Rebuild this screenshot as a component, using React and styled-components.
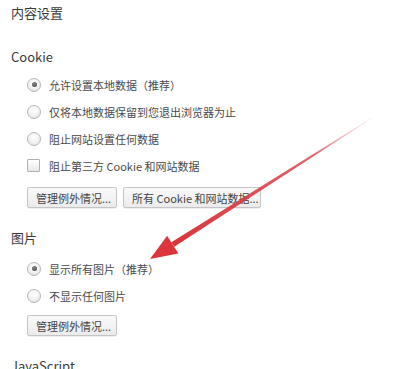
import styled, { createGlobalStyle } from "styled-components";

const GlobalStyle = createGlobalStyle`
  html, body {
    margin: 0;
    padding: 0;
    background: #ffffff;
  }
  body {
    font-family: "Noto Sans CJK SC", "Noto Sans", sans-serif;
    color: #333;
    overflow: hidden;
  }
`;

const Page = styled.div`
  position: relative;
  width: 406px;
  height: 369px;
  padding: 4px 0 0 11px;
  box-sizing: border-box;
  overflow: hidden;
`;

const Title = styled.div`
  font-size: 13px;
  line-height: 18px;
  color: #3a3a3a;
`;

const Heading = styled.div`
  font-size: 13px;
  line-height: 18px;
  color: #3a3a3a;
  margin-top: ${p => p.$gap}px;
`;

const OptionList = styled.div`
  display: flex;
  flex-direction: column;
  padding-left: 16px;
  margin-top: ${p => p.$gap}px;
`;

const Option = styled.label`
  display: flex;
  align-items: center;
  gap: 8px;
  height: 27px;
  font-size: 11px;
  color: #4a4a4a;
`;

const Radio = styled.span`
  position: relative;
  width: 12px;
  height: 12px;
  border-radius: 50%;
  border: 1px solid #b8b8b8;
  background: radial-gradient(circle at 50% 35%, #ffffff 0%, #f1f1f1 55%, #dadada 100%);
  flex-shrink: 0;

  &::after {
    content: "";
    display: ${p => (p.$checked ? "block" : "none")};
    position: absolute;
    left: 3.5px;
    top: 3.5px;
    width: 5px;
    height: 5px;
    border-radius: 50%;
    background: radial-gradient(circle at 40% 35%, #8a8a8a 0%, #4a4a4a 80%);
  }
`;

const Checkbox = styled.span`
  width: 11px;
  height: 11px;
  border: 1px solid #b0b0b0;
  border-radius: 1px;
  background: linear-gradient(#ffffff, #e8e8e8);
  flex-shrink: 0;
  margin-right: 1px;
`;

const ButtonRow = styled.div`
  display: flex;
  gap: 6px;
  padding-left: 16px;
  margin-top: ${p => p.$gap}px;
`;

const Button = styled.button`
  height: 21px;
  padding: 0 8px;
  width: ${p => p.$width}px;
  border: 1px solid #c4c4c4;
  border-radius: 2px;
  background: linear-gradient(#fafafa, #ebebeb);
  box-shadow: 0 1px 0 rgba(0, 0, 0, 0.06);
  font-family: "Noto Sans CJK SC", "Noto Sans", sans-serif;
  font-size: 11px;
  color: #444;
  white-space: nowrap;
  overflow: hidden;
  box-sizing: border-box;
`;

const Arrow = styled.svg`
  position: absolute;
  left: 0;
  top: 0;
  pointer-events: none;
`;

function RedArrow() {
  const tail = [372, 118];
  const tip = [150, 259];
  const dx = tip[0] - tail[0];
  const dy = tip[1] - tail[1];
  const len = Math.hypot(dx, dy);
  const ux = dx / len;
  const uy = dy / len;
  const nx = -uy;
  const ny = ux;
  const headLen = 27;
  const headHalf = 10.5;
  const base = [tip[0] - ux * headLen, tip[1] - uy * headLen];
  const pt = (p, k) => `${p[0] + nx * k},${p[1] + ny * k}`;
  const shaft = [pt(tail, 0.4), pt(base, 2.7), pt(base, -2.7), pt(tail, -0.4)].join(" ");
  const head = [pt(base, headHalf), `${tip[0]},${tip[1]}`, pt(base, -headHalf)].join(" ");

  return (
    <Arrow width="406" height="369" viewBox="0 0 406 369">
      <defs>
        <linearGradient
          id="arrowFade"
          gradientUnits="userSpaceOnUse"
          x1={tail[0]}
          y1={tail[1]}
          x2={base[0]}
          y2={base[1]}
        >
          <stop offset="0" stopColor="#e07a80" stopOpacity="0.12" />
          <stop offset="0.3" stopColor="#d8474e" stopOpacity="0.85" />
          <stop offset="1" stopColor="#d9343a" stopOpacity="1" />
        </linearGradient>
      </defs>
      <polygon points={shaft} fill="url(#arrowFade)" />
      <polygon points={head} fill="#dc353b" />
    </Arrow>
  );
}

export default function App() {
  return (
    <>
      <GlobalStyle />
      <Page>
        <Title>内容设置</Title>

        <Heading $gap={26}>Cookie</Heading>
        <OptionList $gap={5}>
          <Option>
            <Radio $checked />
            允许设置本地数据（推荐）
          </Option>
          <Option>
            <Radio />
            仅将本地数据保留到您退出浏览器为止
          </Option>
          <Option>
            <Radio />
            阻止网站设置任何数据
          </Option>
          <Option>
            <Checkbox />
            阻止第三方 Cookie 和网站数据
          </Option>
        </OptionList>
        <ButtonRow $gap={8}>
          <Button $width={90}>管理例外情况...</Button>
          <Button $width={138}>所有 Cookie 和网站数据...</Button>
        </ButtonRow>

        <Heading $gap={21}>图片</Heading>
        <OptionList $gap={8}>
          <Option>
            <Radio $checked />
            显示所有图片（推荐）
          </Option>
          <Option>
            <Radio />
            不显示任何图片
          </Option>
        </OptionList>
        <ButtonRow $gap={6}>
          <Button $width={90}>管理例外情况...</Button>
        </ButtonRow>

        <Heading $gap={21}>JavaScript</Heading>

        <RedArrow />
      </Page>
    </>
  );
}
